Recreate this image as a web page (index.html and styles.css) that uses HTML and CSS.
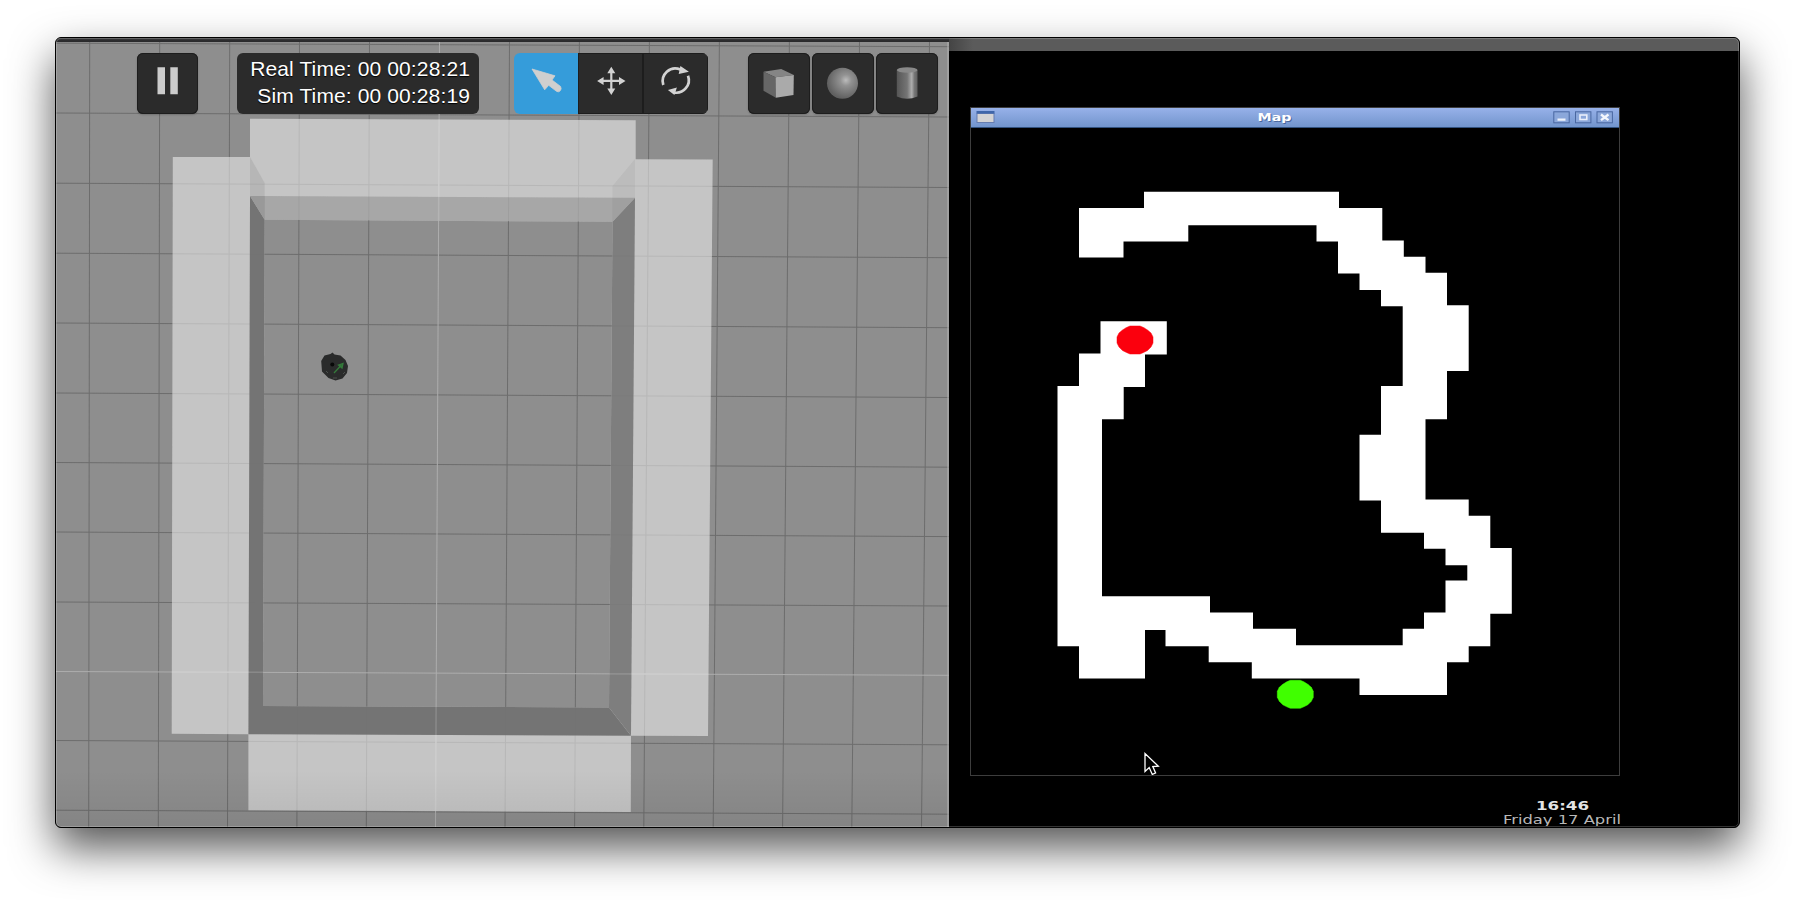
FILE: index.html
```html
<!DOCTYPE html>
<html lang="en">
<head>
<meta charset="utf-8">
<title>Simulation and map</title>
<link rel="stylesheet" href="styles.css">
</head>
<body>
<main class="window">
  <section class="sim">
    <svg class="scene" viewBox="56 38 892.5 789" width="892.5" height="789">
      <defs>
        <linearGradient id="fade" x1="0" y1="0" x2="0" y2="1"><stop offset="0" stop-color="#000" stop-opacity="0"/><stop offset="1" stop-color="#000" stop-opacity=".07"/></linearGradient>
        <linearGradient id="bar" x1="0" y1="0" x2="0" y2="1"><stop offset="0" stop-color="#414143"/><stop offset=".5" stop-color="#2d2d2f"/><stop offset="1" stop-color="#29292b"/></linearGradient>
        <path id="verticals" d="M89.7 42L88.7 827M159.7 42L158.3 827M229.7 42L227.5 827M299.5 42L296.9 827M369.5 42L366.3 827M509.5 42L505 827M579.4 42L574.6 827M649.4 42L643.8 827M719.4 42L713.2 827M789.4 42L782.6 827M859.5 42L851.8 827M929.5 42L921.5 827"/>
        <path id="horizontals" d="M56 43.2L949 46.7M56 113L949 117M56 183.2L949 187.5M56 253.2L949 257.7M56 323L949 327.7M56 393L949 397.5M56 462.5L949 467.2M56 532L949 536.6M56 602L949 606M56 740.5L949 744.8M56 810.2L949 814.2"/>
      </defs>
      <rect x="56" y="38" width="893" height="789" fill="#8e8e8e"/>
      <g class="grid"><use href="#verticals"/><use href="#horizontals"/></g>
      <path class="axis" d="M439.5 42L435.5 827M56 671.5L949 675.3"/>
      <path fill="#c5c5c5" d="M250 118.7L635.7 120.2V159.2L712.7 159.4L708 736L631 735.7L630.8 812L248.4 810.2V734.2L171.7 733.8L172.8 157H250z"/>
      <path fill="#a7a7a7" d="M250 196L635 197.7L612.5 221.8L264.7 219.8z"/>
      <path fill="#8e8e8e" d="M264.7 219.8L612.5 221.8L609 707.5L263 706z"/>
      <path fill="#757575" d="M250 196L264.7 219.8L263 706L609 707.5L631 735.7L248.4 734.2z"/>
      <path fill="#7e7e7e" d="M635 197.7L612.5 221.8L609 707.5L631 735.7z"/>
      <path fill="#b7b7b7" d="M250 157L264.7 183V196H250z"/>
      <path fill="#999" d="M250 196H264.7V219.8z"/>
      <path fill="#bcbcbc" d="M635 159L612.5 186V197.6H635z"/>
      <path fill="#a0a0a0" d="M635 197.7H612.5V221.8z"/>
      <clipPath id="floor"><path d="M264.7 219.8L612.5 221.8L609 707.5L263 706z"/></clipPath>
      <clipPath id="walls"><path clip-rule="evenodd" d="M250 118.7L635.7 120.2V159.2L712.7 159.4L708 736L631 735.7L630.8 812L248.4 810.2V734.2L171.7 733.8L172.8 157H250zM264.7 219.8L612.5 221.8L609 707.5L263 706z"/></clipPath>
      <g clip-path="url(#floor)"><g class="grid"><use href="#verticals"/><use href="#horizontals"/></g><path class="axis" d="M439.5 42L435.5 827M56 671.5L949 675.3"/></g>
      <g clip-path="url(#walls)" opacity=".15"><g class="grid"><use href="#verticals"/><use href="#horizontals"/></g><path class="axis strong" d="M439.5 42L435.5 827M56 671.5L949 675.3"/></g>
      <rect x="56" y="770" width="893" height="57" fill="url(#fade)"/>
      <g>
        <path fill="#2a2b2b" d="M321.2 361L324.500 355.5L330.500 354L332.500 352.5L334.500 354.5L340.500 355.5L345.500 360L348 366L347 373L342.500 378.5L335.500 380.5L328.500 378L322 371.5z"/>
        <circle cx="332.3" cy="364.4" r="2" fill="#080808"/>
        <path d="M334 373L341 365.500M338.500 365L343 363.500L342 368z" fill="#2f6e35" stroke="#357a3b" stroke-width="1.300"/>
        <path d="M326 371l2 2M333 378h4M343 374l2-2" stroke="#4c504d" stroke-width="1"/>
      </g>
      <rect x="56" y="38" width="893" height="4" fill="url(#bar)"/>
      <path d="M948 42V827" stroke="#b2b2b2" stroke-width="1"/>
    </svg>
    <nav class="toolbar">
      <button class="tool pause" aria-label="Pause"><svg width="61" height="61"><path fill="#ccc" d="M20.500 14.300h7.500v27h-7.500zM33.300 14.300h7.500v27h-7.500z"/></svg></button>
      <div class="times"><div>Real Time: 00 00:28:21</div><div>Sim Time: 00 00:28:19</div></div>
      <div class="modes">
        <button class="mode active" aria-label="Select"><svg width="64" height="61"><path fill="#cfcfcf" stroke="#cfcfcf" stroke-width=".8" stroke-linejoin="round" d="M18 16L41 22.800L38 27L46.600 33.500Q48 36 46 38Q44.500 39.500 42.500 38.300L34.700 32.300L30.700 36.800z"/></svg></button>
        <button class="mode" aria-label="Move"><svg width="65" height="61"><path fill="#d2d2d2" d="M33.300 13.700l4 6.500h-2.900v6.600h6.600v-2.900l6.500 4l-6.500 4v-2.900h-6.600v6.600h2.900l-4 6.500l-4-6.500h2.900v-6.600h-6.600v2.900l-6.500-4l6.500-4v2.900h6.600v-6.600h-2.900z"/></svg></button>
        <button class="mode" aria-label="Rotate"><svg width="65" height="61"><path fill="none" stroke="#d2d2d2" stroke-width="2.700" d="M20.300 32A12.600 12.600 0 0 1 37.400 16.600M45 22.700A12.600 12.600 0 0 1 30.900 39.500"/><path fill="#d2d2d2" d="M37.400 13L45.900 18.700L35.700 21zM24.900 37L33.900 34.500L31.400 42z"/></svg></button>
      </div>
      <div class="shapes">
        <button class="tool" aria-label="Box"><svg width="61" height="61"><path fill="#858585" d="M15.500 18.700L33.200 16L45.800 22L27.500 24.300z"/><path fill="#666" d="M15.500 18.700L27.500 24.300L27.800 44.700L15.500 37.700z"/><path fill="#aaa" d="M27.500 24.300L45.800 22L45.500 42L27.800 44.700z"/></svg></button>
        <button class="tool" aria-label="Sphere"><svg width="61" height="61"><defs><radialGradient id="ball" cx=".61" cy=".4" r=".6"><stop offset="0" stop-color="#bcbcbc"/><stop offset=".3" stop-color="#929292"/><stop offset="1" stop-color="#606060"/></radialGradient></defs><circle cx="30.500" cy="30.300" r="15.500" fill="url(#ball)"/></svg></button>
        <button class="tool" aria-label="Cylinder"><svg width="61" height="61"><defs><linearGradient id="can"><stop offset="0" stop-color="#555"/><stop offset=".5" stop-color="#757575"/><stop offset=".72" stop-color="#adadad"/><stop offset=".85" stop-color="#777"/><stop offset="1" stop-color="#606060"/></linearGradient></defs><path fill="url(#can)" d="M20.800 17V43.500Q31 48 41.500 43.500V17z"/><ellipse cx="31.150" cy="17" rx="10.350" ry="2.800" fill="#898989"/></svg></button>
      </div>
    </nav>
  </section>
  <section class="desktop">
    <div class="topbar"></div>
    <article class="map-window">
      <header class="titlebar">
        <svg class="menu-icon" width="19" height="13"><rect x=".5" width="18" height="3" fill="#3f66aa"/><rect x=".5" y="2.500" width="18" height="9.500" fill="#667db0"/><rect x="1.500" y="3" width="16" height="8" fill="#d3d3d5"/></svg>
        <svg class="title" width="40" height="18"><text class="shadow" x="3.500" y="10.500" textLength="34" lengthAdjust="spacingAndGlyphs">Map</text><text x="2.500" y="9.500" textLength="34" lengthAdjust="spacingAndGlyphs">Map</text></svg>
        <svg class="controls" width="61" height="13"><g fill="#8ba7da" stroke="#4967a0"><rect x=".8" y=".8" width="15.400" height="11"/><rect x="22.500" y=".8" width="15.400" height="11"/><rect x="44" y=".8" width="15.400" height="11"/></g><path fill="#eef2fa" d="M4.500 7.500h8v2.200h-8z"/><rect x="27" y="4" width="6.800" height="4.500" fill="none" stroke="#e9eefa" stroke-width="1.600"/><path fill="none" stroke="#f3f6fc" stroke-width="2.300" d="M48 3.500l7.500 5.700M55.500 3.500L48 9.200"/></svg>
      </header>
      <svg class="map" viewBox="971 128 648 647" width="648" height="647">
        <path fill="#fff" d="M1079 208H1144V191.700H1339V208H1382.300V240.500H1403.800V256.700H1425.500V272.700H1447V305.300H1468.700V371H1447V419.300H1425.500V499.500H1468.700V515.700H1490.300V548H1511.800V613.700H1490.300V646.200H1468.700V662.300H1447V695H1359.500V678.500H1251.800V662.300H1208.700V646.200H1165.500V630H1145V678.500H1079V646.200H1057.500V386H1079V353.500H1100.500V321.300H1166.800V354.500H1145V387H1123.700V419.300H1102V596.300H1210V612.500H1253V628.700H1296V645.200H1402.700V628.700H1424V612.500H1445.500V580.500H1467.300V565.300H1445.500V548.800H1424V532.700H1381V500.500H1359.500V434.700H1381V386H1402.700V306.300H1381V290H1359.500V273.500H1338V241.500H1316.500V225.300H1188.300V241.500H1123.500V257.500H1079z"/>
        <path fill="#fb000d" stroke="#fb000d" stroke-width=".5" d="M1130 326h10l3.500 1.500 4 2.500 3.500 3 2 4v6l-2 4-3.500 3.500-4 2-3.500 1.500h-10l-3.500-1.500-4-2-3.500-3.500-2-4v-6l2-4 3.500-3 4-2.500z"/>
        <path fill="#40ff00" stroke="#40ff00" stroke-width=".5" d="M1290.300 680.300h10l3.500 1.500 4 2.500 3.500 3 2 4v6l-2 4-3.500 3.500-4 2-3.500 1.500h-10l-3.500-1.500-4-2-3.500-3.500-2-4v-6l2-4 3.500-3 4-2.500z"/>
        <path fill="#000" stroke="#fff" stroke-width="1.300" d="M1145 753.500V771.500L1149.200 767.500L1152.300 774.400L1155.600 773L1152.800 766.500L1158.300 766.200z"/>
      </svg>
    </article>
    <svg class="clock" viewBox="1500 797 125 30" width="125" height="30">
      <text class="time" x="1536" y="810.500" textLength="53" lengthAdjust="spacingAndGlyphs">16:46</text>
      <text class="date" x="1503" y="824.500" textLength="118" lengthAdjust="spacingAndGlyphs">Friday 17 April</text>
    </svg>
  </section>
</main>
</body>
</html>
```

FILE: styles.css
```css
* { box-sizing: border-box; }
html, body { height: 100%; }
body { margin: 0; padding: 37px 55px 0; background: #fff; overflow: hidden; font-family: "Liberation Sans", Arial, sans-serif; }
svg { display: block; }
.window { position: relative; display: flex; width: 1685px; height: 791px; border: 1px solid #000; border-radius: 6px; overflow: hidden; background: #000; box-shadow: 0 20px 44px rgba(0, 0, 0, .67); }
.window::after { content: ""; position: absolute; inset: 0; border: 1px solid rgba(255, 255, 255, .2); border-radius: 5px; pointer-events: none; }
.sim { position: relative; width: 892.500px; height: 789px; flex: none; }
.scene { position: absolute; inset: 0; }
.grid { fill: none; stroke: #6d6d6d; stroke-width: 1; }
.axis { fill: none; stroke: #adadad; stroke-width: 1; }
.axis.strong { stroke: #fff; stroke-width: 1.500; }
.toolbar { position: relative; display: flex; padding: 15px 0 0 81px; }
button { padding: 0; margin: 0; border: 0; font: inherit; }
.tool { width: 61.300px; height: 61px; border-radius: 6px; background: #2b2b2b; box-shadow: inset 0 0 0 1px #1d1d1d, 0 1px 2px rgba(0, 0, 0, .2); }
.times { width: 242px; height: 61px; margin-left: 38.700px; padding: 3px 9px 0 0; border-radius: 6px; background: #2b2b2b; color: #fff; font-size: 21px; line-height: 26.600px; letter-spacing: .12px; text-align: right; text-shadow: 0 1px 1px #000; white-space: nowrap; }
.modes { display: flex; width: 194.500px; height: 61px; margin-left: 35px; border-radius: 6px; overflow: hidden; }
.mode { flex: 1; height: 61px; background: #2b2b2b; box-shadow: inset 0 0 0 1px #1d1d1d; }
.mode.active { flex: 0 0 64px; background: #359cda; box-shadow: none; }
.shapes { display: flex; gap: 2.700px; margin-left: 40px; }
.desktop { display: flex; flex-direction: column; flex: 1; background: #000; }
.topbar { height: 13px; flex: none; background: linear-gradient(90deg, #444, #5b5b5b 24px); }
.map-window { width: 650px; height: 669px; margin: 56px 0 0 21.500px; border: 1px solid #3d3d3d; flex: none; }
.titlebar { display: flex; align-items: flex-start; height: 20px; padding: 3px 5px 0 5px; border-bottom: 1px solid #32527f; background: linear-gradient(#97b1e9, #7295cd); }
.title { margin-left: 260px; }
.title text { font: bold 11px "DejaVu Sans", sans-serif; fill: #fff; }
.title .shadow { fill: #49679d; }
.controls { margin: 0 0 0 auto; }
.clock { margin: 20px 0 0 551.500px; flex: none; }
.time { font: bold 12.500px "DejaVu Sans", sans-serif; fill: #e4e4e4; }
.date { font: 12.500px "DejaVu Sans", sans-serif; fill: #b9b9b9; }
```
